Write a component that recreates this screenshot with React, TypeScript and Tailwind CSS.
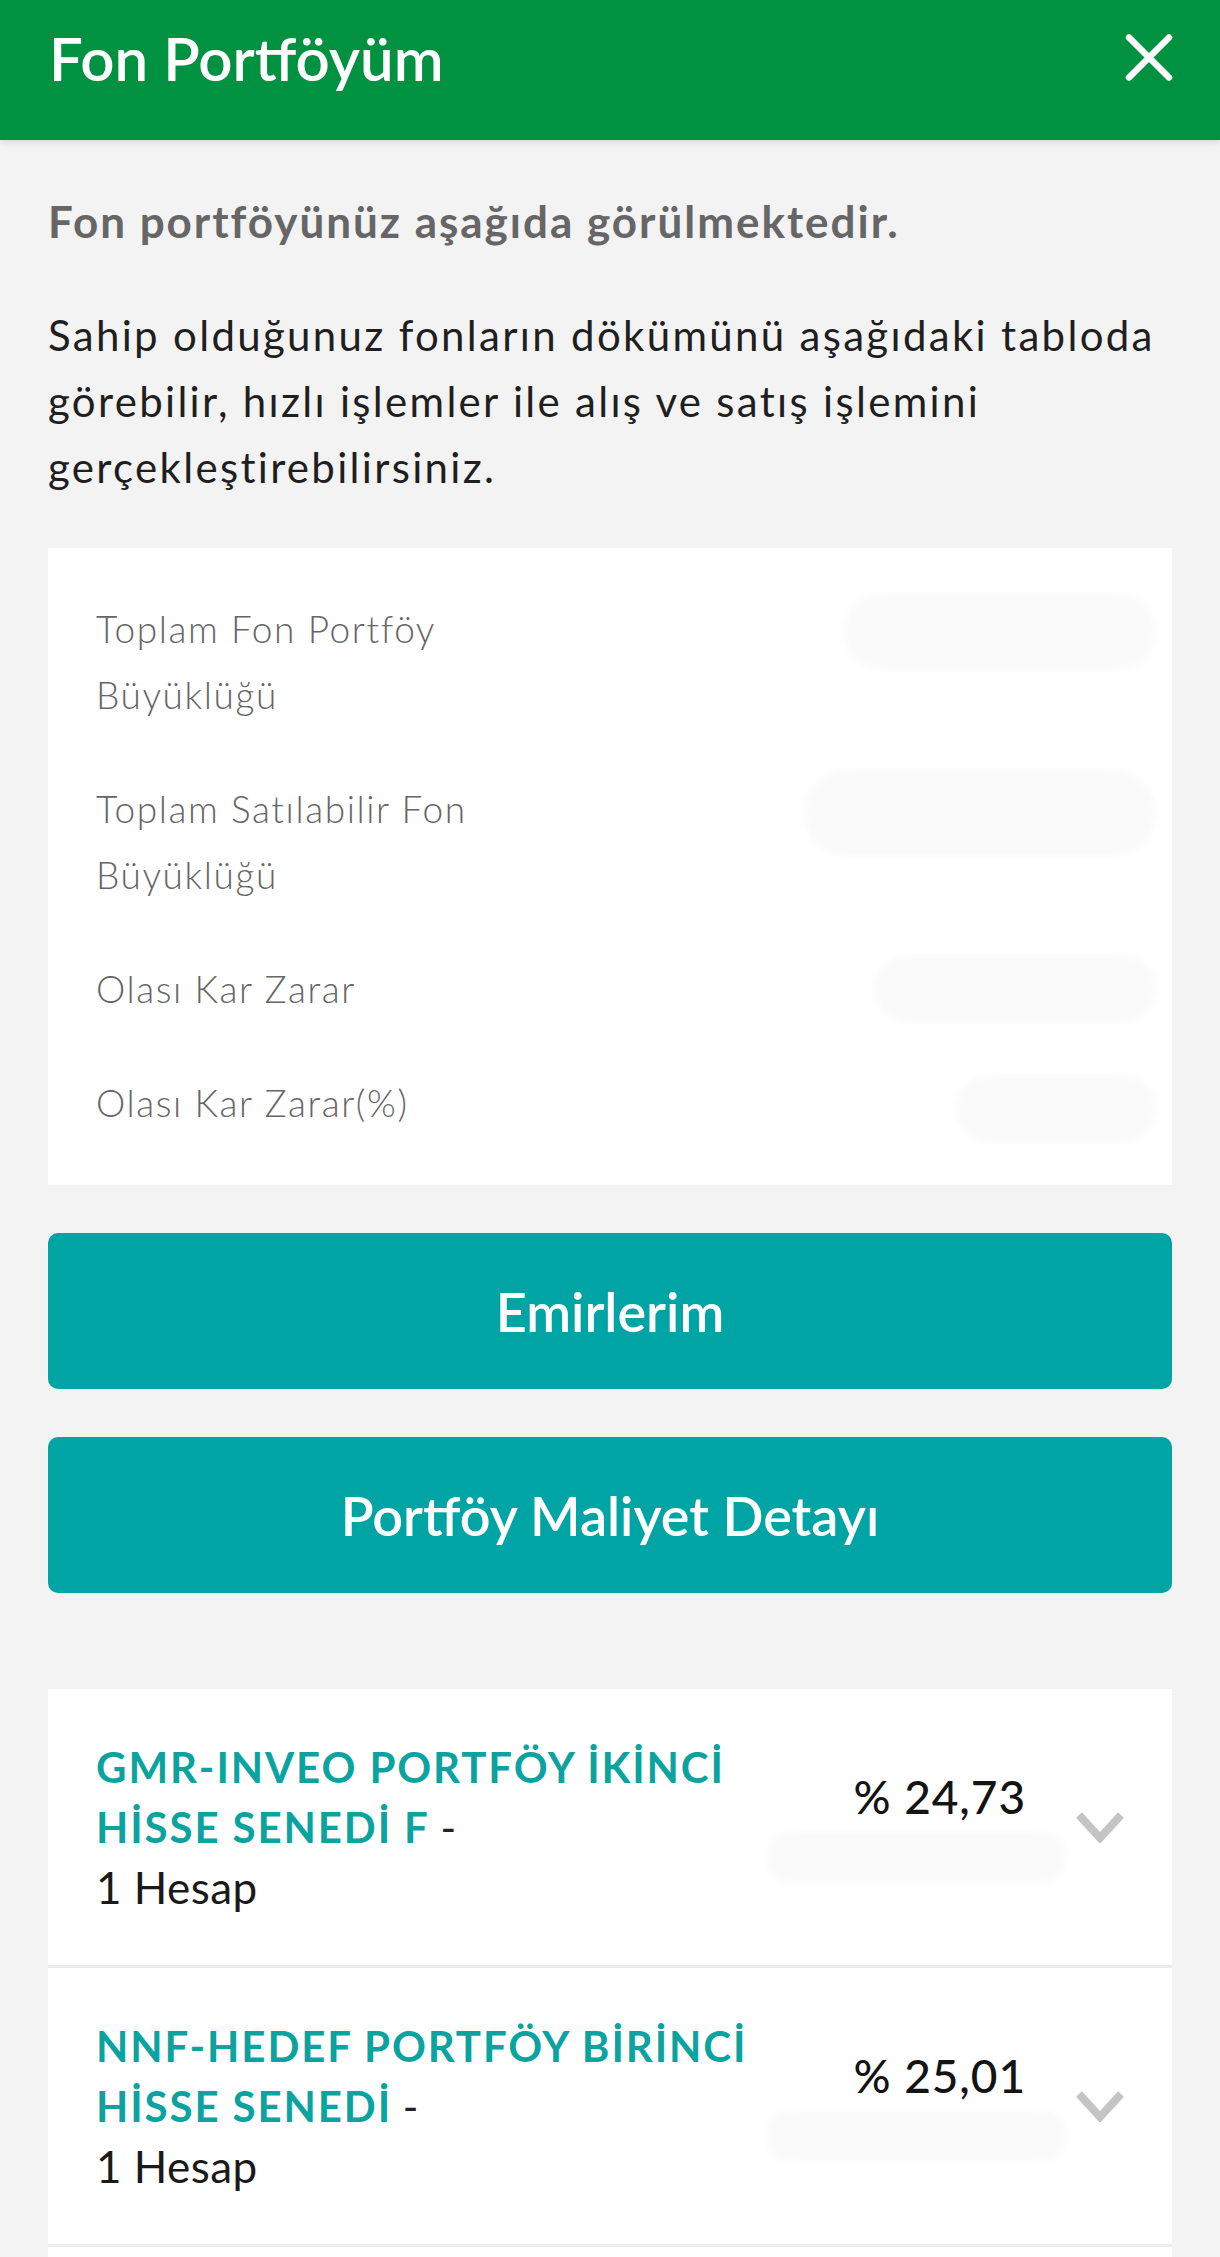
const summary = [
  { label: 'Toplam Fon Portföy Büyüklüğü', blob: 'w-[312px] h-[76px] mt-[-2px]' },
  { label: 'Toplam Satılabilir Fon Büyüklüğü', blob: 'w-[352px] h-[86px] mt-[-6px]' },
  { label: 'Olası Kar Zarar', blob: 'w-[282px] h-[66px] mt-0' },
  { label: 'Olası Kar Zarar(%)', blob: 'w-[200px] h-[66px] mt-[6px]' },
];

const funds = [
  { name: 'GMR-INVEO PORTFÖY İKİNCİ HİSSE SENEDİ F', pct: '% 24,73' },
  { name: 'NNF-HEDEF PORTFÖY BİRİNCİ HİSSE SENEDİ', pct: '% 25,01' },
  { name: 'YAS-YAPI KREDİ PORTFÖY KOÇ HOLDİNG İŞTİRAK', pct: '% 50,26' },
];

function CloseIcon() {
  return (
    <svg width="48" height="49" viewBox="0 0 48 49" fill="none">
      <path d="M4 4.5L44 44.5M44 4.5L4 44.5" stroke="#ffffff" strokeWidth="6.5" strokeLinecap="round" />
    </svg>
  );
}

function Chevron() {
  return (
    <svg width="48" height="31" viewBox="0 0 48 31" fill="none" className="shrink-0">
      <path d="M3 3L24 26L45 3" stroke="#c4c4c4" strokeWidth="8" />
    </svg>
  );
}

function FundRow({ name, pct }: { name: string; pct: string }) {
  return (
    <div className="flex items-center justify-between px-12 py-12 border-b-[3px] border-[#ececec]">
      <div className="w-[720px] leading-[60px]">
        <p className="text-[42px]">
          <span className="font-bold tracking-[0.045em] text-[#0aa3a0]">{name}</span>
          <span className="text-[#222]"> -</span>
        </p>
        <p className="text-[44px] tracking-[0.01em] text-[#1a1a1a]">1 Hesap</p>
      </div>
      <div className="flex items-center gap-[50px]">
        <div className="flex flex-col items-end">
          <p className="text-[46px] leading-[60px] font-medium tracking-[0.02em] text-[#141414]">{pct}</p>
          <div className="h-[60px] flex items-center mr-[-40px]">
            <div className="w-[300px] h-[52px] rounded-full bg-[#fafafa] blur-[3px]" />
          </div>
        </div>
        <Chevron />
      </div>
    </div>
  );
}

export default function App() {
  return (
    <div className="min-h-screen bg-[#f3f3f3] font-['Lato',sans-serif]">
      <header className="h-[140px] bg-[#009241] flex items-start justify-between pl-[49px] pr-[47px] shadow-[0_2px_6px_rgba(0,0,0,0.12)]">
        <h1 className="pt-[28px] text-[60px] leading-none font-semibold text-white">Fon Portföyüm</h1>
        <div className="mt-[33px]">
          <CloseIcon />
        </div>
      </header>

      <main className="px-12 pt-12 pb-0">
        <p className="text-[44px] leading-[66px] font-bold tracking-[0.045em] text-[#666666]">
          Fon portföyünüz aşağıda görülmektedir.
        </p>
        <p className="mt-12 text-[42px] leading-[66px] tracking-[0.055em] text-[#1f1f1f]">
          Sahip olduğunuz fonların dökümünü aşağıdaki tabloda görebilir, hızlı işlemler ile alış ve satış işlemini gerçekleştirebilirsiniz.
        </p>

        <section className="mt-12 bg-white px-12 pt-12 pb-[43px] flex flex-col gap-12">
          {summary.map((row) => (
            <div key={row.label} className="flex items-start justify-between">
              <p className="w-[440px] text-[37px] leading-[66px] font-light tracking-[0.043em] text-[#666666]">
                {row.label}
              </p>
              <div className={`${row.blob} mr-[-32px] rounded-full bg-[#fafafa] blur-[3px]`} />
            </div>
          ))}
        </section>

        <button className="mt-12 w-full h-[156px] rounded-[10px] bg-[#00a4a4] text-white text-[54px] font-semibold">
          Emirlerim
        </button>
        <button className="mt-12 w-full h-[156px] rounded-[10px] bg-[#00a4a4] text-white text-[54px] font-semibold">
          Portföy Maliyet Detayı
        </button>

        <section className="mt-24 bg-white">
          {funds.map((f) => (
            <FundRow key={f.name} name={f.name} pct={f.pct} />
          ))}
        </section>
      </main>
    </div>
  );
}
